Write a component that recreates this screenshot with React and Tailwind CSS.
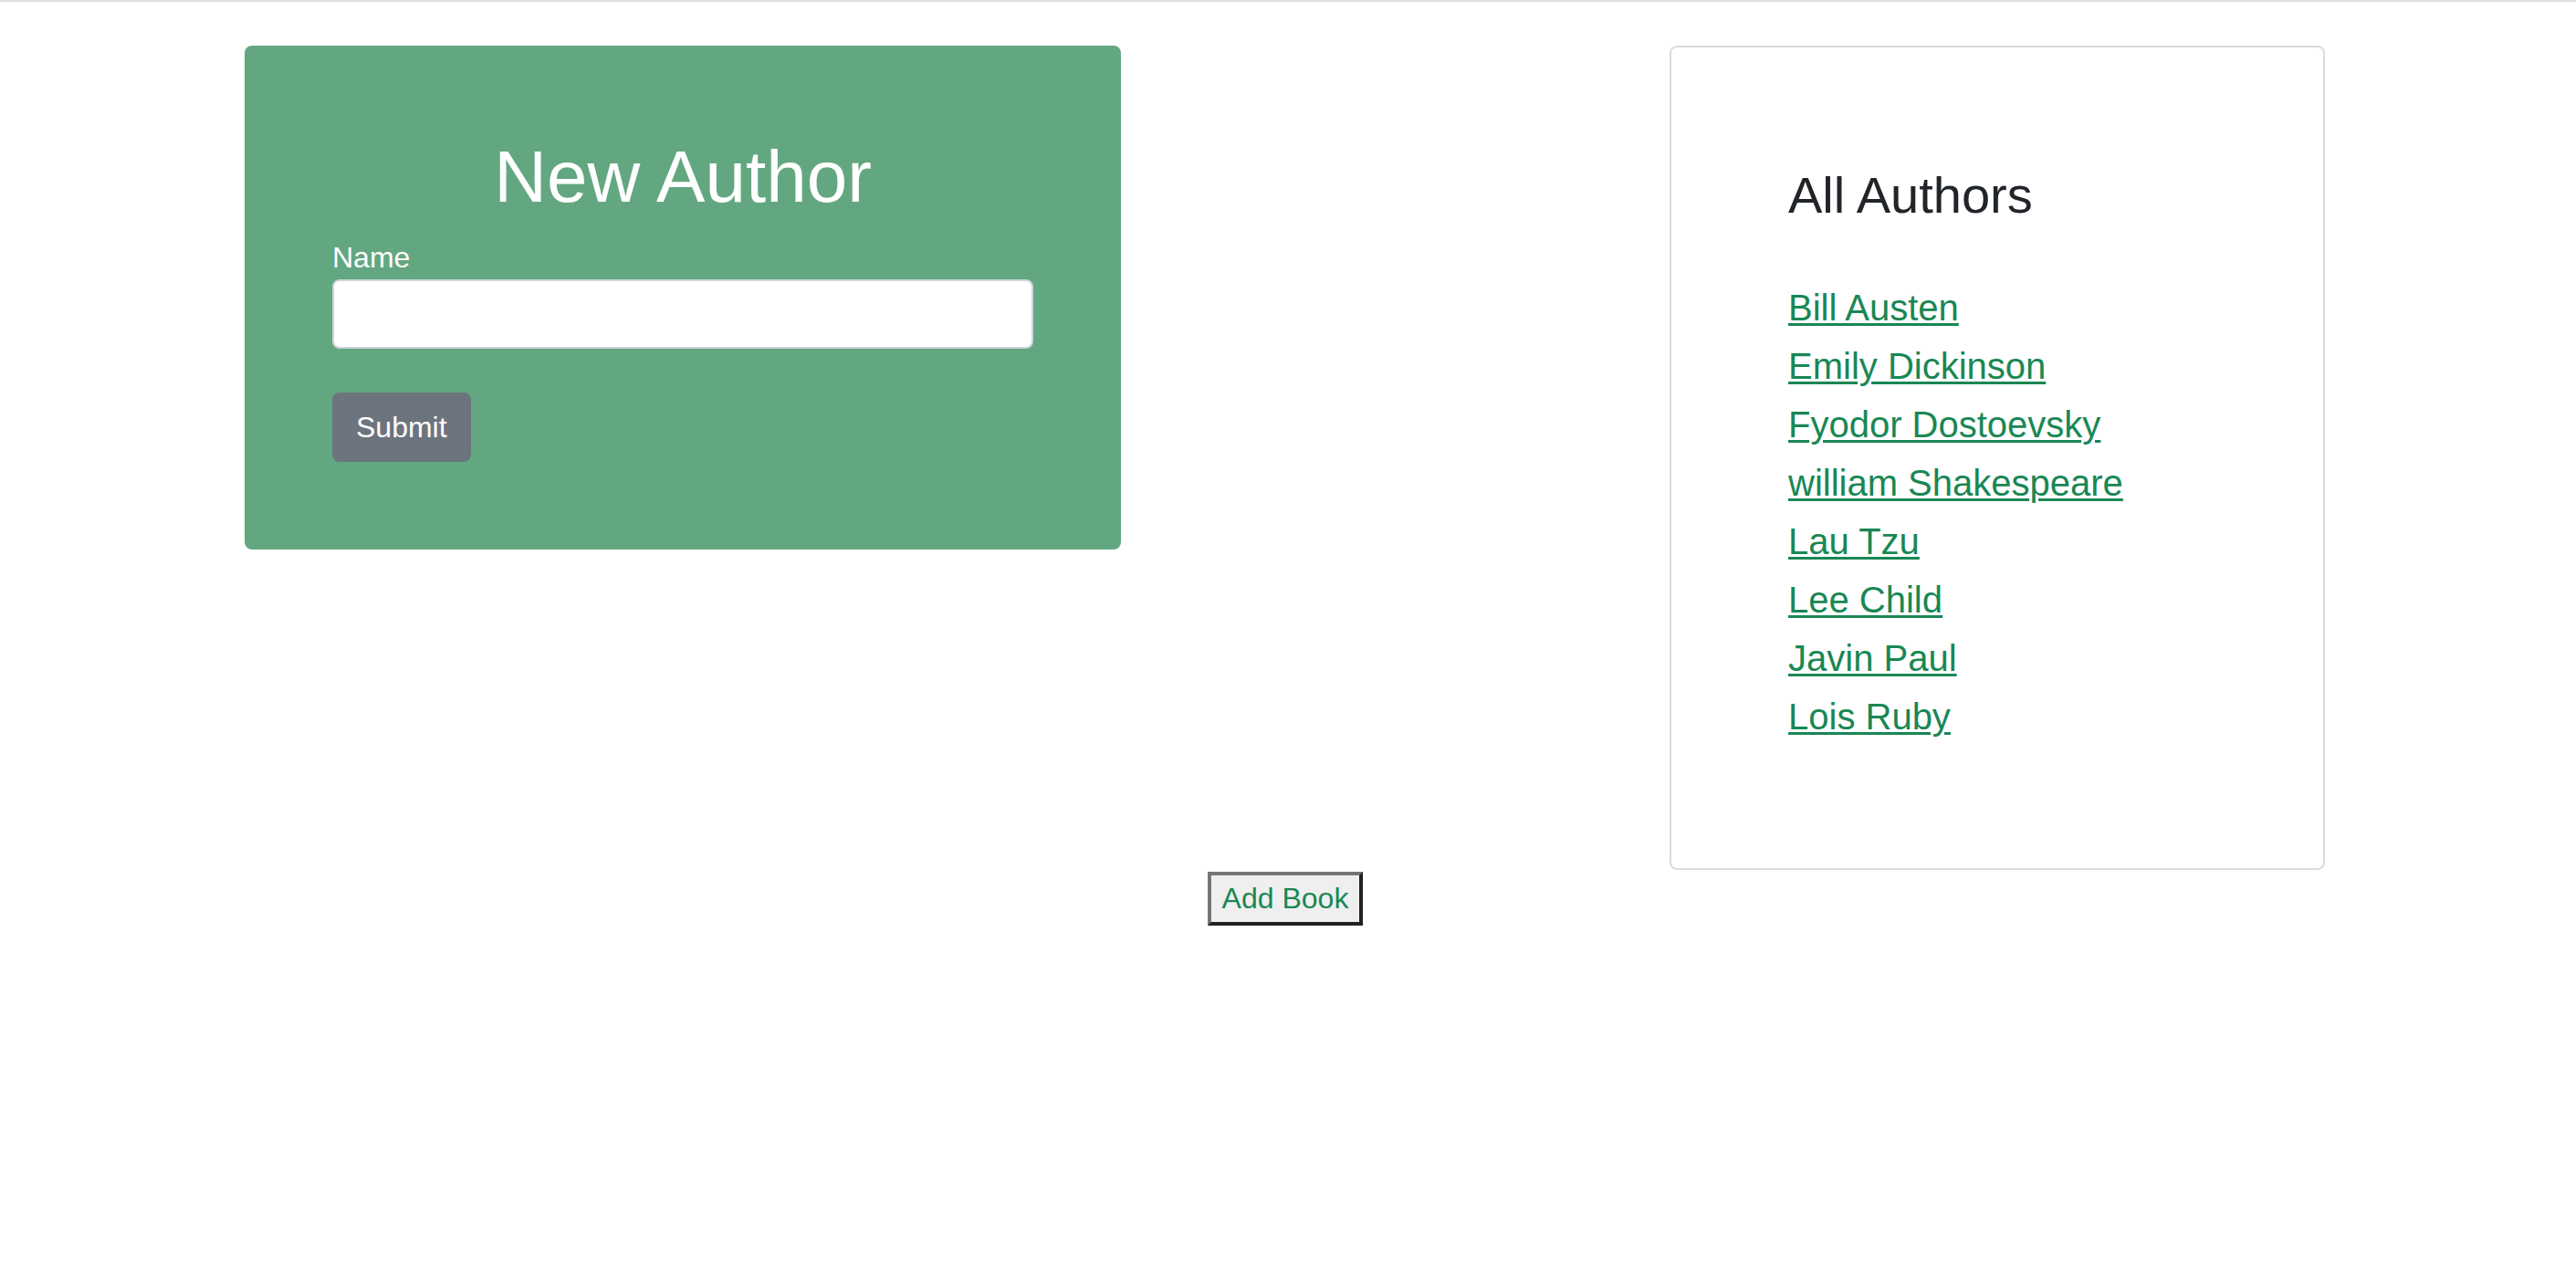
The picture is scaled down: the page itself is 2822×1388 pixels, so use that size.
import React, { useState } from 'react';

const authors = [
  'Bill Austen',
  'Emily Dickinson',
  'Fyodor Dostoevsky',
  'william Shakespeare',
  'Lau Tzu',
  'Lee Child',
  'Javin Paul',
  'Lois Ruby',
];

export default function App() {
  const [name, setName] = useState('');

  return (
    <div className="min-h-screen bg-white font-['Liberation_Sans',Arial,sans-serif]">
      <div className="h-[2px] bg-[#dedede]" />

      <div className="flex items-start pl-[268px] pt-[48px]">
        {/* new author form */}
        <div className="w-[960px] bg-[#63a780] rounded-[8px] p-[96px]">
          <h1 className="text-white text-[80px] leading-[1.2] font-medium text-center mb-[16px]">New Author</h1>
          <form onSubmit={e => e.preventDefault()}>
            <label className="block text-white text-[32px] leading-[1.5]">Name</label>
            <input
              type="text"
              value={name}
              onChange={e => setName(e.target.value)}
              className="block w-full h-[76px] bg-white border-2 border-[#ced4da] rounded-[8px] px-[24px] text-[32px] outline-none"
            />
            <button
              type="submit"
              className="mt-[48px] bg-[#6c757d] text-white text-[32px] leading-[1.5] px-[24px] py-[12px] border-2 border-[#6c757d] rounded-[8px]"
            >
              Submit
            </button>
          </form>
        </div>

        {/* author list */}
        <div className="ml-[601px] w-[718px] border-2 border-[#dcdcdc] rounded-[8px] px-[128px] pt-[128px] pb-[134px]">
          <h3 className="text-[#212529] text-[56px] leading-[1.2] font-medium">All Authors</h3>
          <ul className="mt-[58px]">
            {authors.map(a => (
              <li key={a} className="text-[40px] leading-[64px]">
                <a href="#" className="text-[#198754] underline underline-offset-[3px] decoration-[3px]">{a}</a>
              </li>
            ))}
          </ul>
        </div>
      </div>

      <div className="flex justify-center pr-[6px] mt-[2px]">
        <button className="bg-[#efefef] text-[#198754] text-[32px] leading-[43px] px-[12px] py-[4px] border-[4px] border-t-[#767676] border-l-[#767676] border-b-[#222] border-r-[#222]">
          Add Book
        </button>
      </div>
    </div>
  );
}
